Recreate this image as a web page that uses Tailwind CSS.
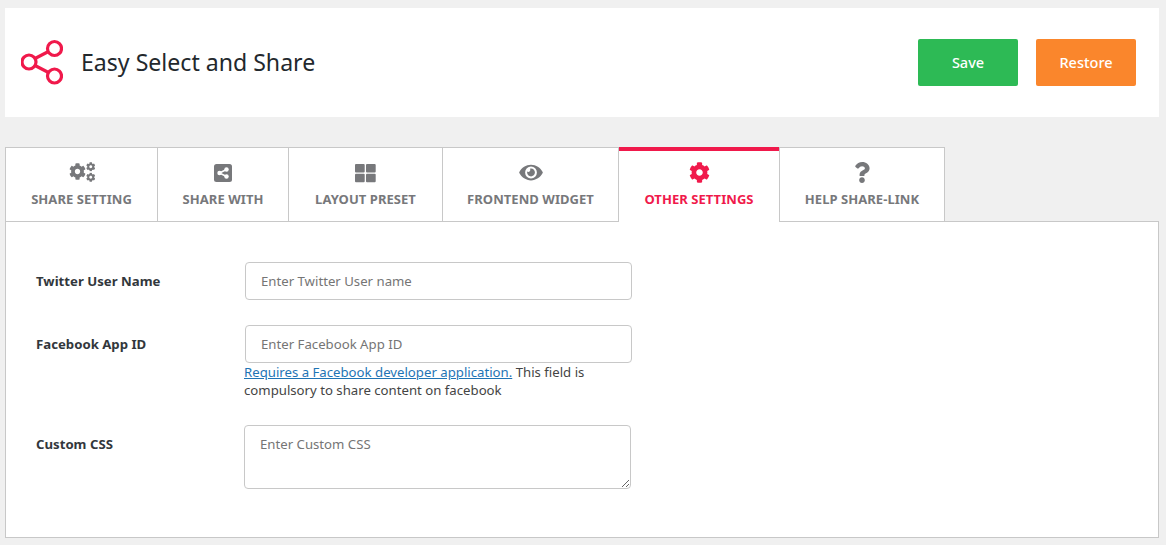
<!DOCTYPE html>
<html>
<head>
<meta charset="utf-8">
<script src="https://cdn.jsdelivr.net/npm/@tailwindcss/browser@4"></script>
</head>
<body class="m-0 bg-[#f0f0f0] font-['Noto_Sans',sans-serif] text-[#444] h-[545px] overflow-hidden">
<div class="pt-2 pl-[5px] pr-[7px]">
  <header class="h-[109px] bg-white flex items-center justify-between pl-[16px] pr-[23px]">
    <div class="flex items-center gap-[18px]">
      <svg class="w-[42px] h-[46px] -mt-[2px]" viewBox="0 0 42 46" fill="none" stroke="#f0194b" stroke-width="3.2">
        <circle cx="33.5" cy="9.5" r="7"/><circle cx="8" cy="23" r="7"/><circle cx="33.5" cy="37" r="7"/>
        <path d="M14 19.5 27.5 12.5M14 26.5 27.5 33.5"/>
      </svg>
      <h1 class="text-[23.1px] font-normal text-[#23282d] m-0 leading-none">Easy Select and Share</h1>
    </div>
    <div class="flex gap-[18px]">
      <button class="w-[100px] h-[47px] rounded-[2px] bg-[#2dba55] text-white text-[14.5px] font-medium">Save</button>
      <button class="w-[100px] h-[47px] rounded-[2px] bg-[#fa862c] text-white text-[14.5px] font-medium">Restore</button>
    </div>
  </header>

  <nav class="flex mt-[30px] h-[75px] relative z-10 text-[#77787b] text-[13px] tracking-[0.05px] font-bold">
    <div class="w-[152px] bg-white border border-[#c8c8c8] border-r-0 flex flex-col items-center pt-[14px]">
      <svg class="h-[21px] w-[26px]" viewBox="0 0 26 21" fill="#77787b">
        <use href="#cog" x="0" y="1" width="17" height="17"/>
        <use href="#cog" x="17" y="0" width="9.5" height="9.5"/>
        <use href="#cog" x="17" y="10.5" width="9.5" height="9.5"/>
      </svg>
      <span class="mt-[8px] leading-[16px]">SHARE SETTING</span>
    </div>
    <div class="w-[131px] bg-white border border-[#c8c8c8] border-r-0 flex flex-col items-center pt-[14px]">
      <svg class="h-[21px] w-[18px]" viewBox="0 0 18 21">
        <rect x="0" y="2" width="18" height="18" rx="2.5" fill="#77787b"/>
        <path d="M5.5 11 12.5 7.5M5.5 11 12.5 14.5" stroke="#fff" stroke-width="1.4"/>
        <circle cx="5.5" cy="11" r="2.2" fill="#fff"/><circle cx="12.5" cy="7.5" r="2.2" fill="#fff"/><circle cx="12.5" cy="14.5" r="2.2" fill="#fff"/>
      </svg>
      <span class="mt-[8px] leading-[16px]">SHARE WITH</span>
    </div>
    <div class="w-[154px] bg-white border border-[#c8c8c8] border-r-0 flex flex-col items-center pt-[14px]">
      <svg class="h-[21px] w-[21px]" viewBox="0 0 21 21" fill="#77787b">
        <rect x="0" y="2" width="9.7" height="8.5" rx="1"/><rect x="11" y="2" width="9.7" height="8.5" rx="1"/>
        <rect x="0" y="11.7" width="9.7" height="8.5" rx="1"/><rect x="11" y="11.7" width="9.7" height="8.5" rx="1"/>
      </svg>
      <span class="mt-[8px] leading-[16px]">LAYOUT PRESET</span>
    </div>
    <div class="w-[177px] bg-white border border-[#c8c8c8] flex flex-col items-center pt-[14px]">
      <svg class="h-[21px] w-[24px]" viewBox="0 0 576 512" fill="#77787b"><path d="M572.52 241.4C518.29 135.59 410.93 64 288 64S57.68 135.64 3.48 241.41a32.35 32.35 0 0 0 0 29.19C57.71 376.41 165.07 448 288 448s230.32-71.64 284.52-177.41a32.35 32.35 0 0 0 0-29.19zM288 400a144 144 0 1 1 144-144 143.93 143.93 0 0 1-144 144zm0-240a95.31 95.31 0 0 0-25.31 3.79 47.85 47.85 0 0 1-66.9 66.9A95.78 95.78 0 1 0 288 160z"/></svg>
      <span class="mt-[8px] leading-[16px]">FRONTEND WIDGET</span>
    </div>
    <div class="w-[160px] h-[75px] bg-white border-t-4 border-[#f0194b] flex flex-col items-center pt-[11px] text-[#f0194b]">
      <svg class="h-[21px] w-[21px]" viewBox="0 0 512 512" fill="#f0194b"><path d="M487.4 315.7l-42.6-24.6c4.3-23.2 4.3-47 0-70.2l42.6-24.6c4.9-2.8 7.1-8.6 5.5-14-11.1-35.6-30-67.8-54.7-94.6-3.8-4.1-10-5.1-14.8-2.3L380.8 110c-17.9-15.4-38.5-27.3-60.8-35.1V25.8c0-5.6-3.9-10.5-9.4-11.7-36.7-8.2-74.3-7.8-109.2 0-5.5 1.2-9.4 6.1-9.4 11.7V75c-22.2 7.9-42.8 19.8-60.8 35.1L88.7 85.5c-4.9-2.8-11-1.9-14.8 2.3-24.7 26.7-43.6 58.9-54.7 94.6-1.7 5.4.6 11.2 5.5 14L67.3 221c-4.3 23.2-4.3 47 0 70.2l-42.6 24.6c-4.9 2.8-7.1 8.6-5.5 14 11.1 35.6 30 67.8 54.7 94.6 3.8 4.1 10 5.1 14.8 2.3l42.6-24.6c17.9 15.4 38.5 27.3 60.8 35.1v49.2c0 5.6 3.9 10.5 9.4 11.7 36.7 8.2 74.3 7.8 109.2 0 5.5-1.2 9.4-6.1 9.4-11.7v-49.2c22.2-7.9 42.8-19.8 60.8-35.1l42.6 24.6c4.9 2.8 11 1.9 14.8-2.3 24.7-26.7 43.6-58.9 54.7-94.6 1.5-5.5-.7-11.3-5.6-14.1zM256 336c-44.1 0-80-35.9-80-80s35.9-80 80-80 80 35.9 80 80-35.9 80-80 80z"/></svg>
      <span class="mt-[8px] leading-[16px]">OTHER SETTINGS</span>
    </div>
    <div class="w-[166px] bg-white border border-[#c8c8c8] flex flex-col items-center pt-[14px]">
      <svg class="h-[21px] w-[16px]" viewBox="0 0 384 512" fill="#77787b"><path d="M202.021 0C122.202 0 70.503 32.703 29.914 91.026c-7.363 10.58-5.093 25.086 5.178 32.874l43.138 32.709c10.373 7.865 25.132 6.026 33.253-4.148 25.049-31.381 43.63-49.449 82.757-49.449 30.764 0 68.816 19.799 68.816 49.631 0 22.552-18.617 34.134-48.993 51.164-35.423 19.86-82.299 44.576-82.299 106.405V320c0 13.255 10.745 24 24 24h72.471c13.255 0 24-10.745 24-24v-5.773c0-42.86 125.268-44.645 125.268-160.627C377.504 66.256 286.902 0 202.021 0zM192 373.459c-38.196 0-69.271 31.075-69.271 69.271 0 38.195 31.075 69.27 69.271 69.27s69.271-31.075 69.271-69.271-31.075-69.27-69.271-69.27z"/></svg>
      <span class="mt-[8px] leading-[16px]">HELP SHARE-LINK</span>
    </div>
  </nav>
  <svg class="hidden" width="0" height="0"><symbol id="cog" viewBox="0 0 512 512"><path d="M487.4 315.7l-42.6-24.6c4.3-23.2 4.3-47 0-70.2l42.6-24.6c4.9-2.8 7.1-8.6 5.5-14-11.1-35.6-30-67.8-54.7-94.6-3.8-4.1-10-5.1-14.8-2.3L380.8 110c-17.9-15.4-38.5-27.3-60.8-35.1V25.8c0-5.6-3.9-10.5-9.4-11.7-36.7-8.2-74.3-7.8-109.2 0-5.5 1.2-9.4 6.1-9.4 11.7V75c-22.2 7.9-42.8 19.8-60.8 35.1L88.7 85.5c-4.9-2.8-11-1.9-14.8 2.3-24.7 26.7-43.6 58.9-54.7 94.6-1.7 5.4.6 11.2 5.5 14L67.3 221c-4.3 23.2-4.3 47 0 70.2l-42.6 24.6c-4.9 2.8-7.1 8.6-5.5 14 11.1 35.6 30 67.8 54.7 94.6 3.8 4.1 10 5.1 14.8 2.3l42.6-24.6c17.9 15.4 38.5 27.3 60.8 35.1v49.2c0 5.6 3.9 10.5 9.4 11.7 36.7 8.2 74.3 7.8 109.2 0 5.5-1.2 9.4-6.1 9.4-11.7v-49.2c22.2-7.9 42.8-19.8 60.8-35.1l42.6 24.6c4.9 2.8 11 1.9 14.8-2.3 24.7-26.7 43.6-58.9 54.7-94.6 1.5-5.5-.7-11.3-5.6-14.1zM256 336c-44.1 0-80-35.9-80-80s35.9-80 80-80 80 35.9 80 80-35.9 80-80 80z"/></symbol></svg>

  <main class="-mt-px h-[317px] bg-white border border-[#c8c8c8] text-[13.2px] relative">
    <div class="flex pl-[30px] pt-10">
      <label class="w-[209px] font-bold leading-[38px] text-[#32373c]">Twitter User Name</label>
      <input class="w-[387px] h-[38px] border border-[#c8c8c8] rounded-[4px] px-[15px] placeholder:text-[#757575]" placeholder="Enter Twitter User name">
    </div>
    <div class="flex pl-[30px] mt-[25px]">
      <label class="w-[209px] font-bold leading-[38px] text-[#32373c]">Facebook App ID</label>
      <div class="w-[387px]">
        <input class="w-full h-[38px] border border-[#c8c8c8] rounded-[4px] px-[15px] placeholder:text-[#757575] block" placeholder="Enter Facebook App ID">
        <p class="-ml-px leading-[18px] m-0"><a class="text-[#1e74b5] underline">Requires a Facebook developer application.</a> This field is compulsory to share content on facebook</p>
      </div>
    </div>
    <div class="flex pl-[30px] mt-[26px]">
      <label class="w-[208px] font-bold leading-[38px] text-[#32373c]">Custom CSS</label>
      <textarea class="w-[387px] h-[64px] border border-[#c8c8c8] rounded-[4px] px-[15px] py-[9px] placeholder:text-[#757575]" placeholder="Enter Custom CSS"></textarea>
    </div>
  </main>
</div>
</body>
</html>
